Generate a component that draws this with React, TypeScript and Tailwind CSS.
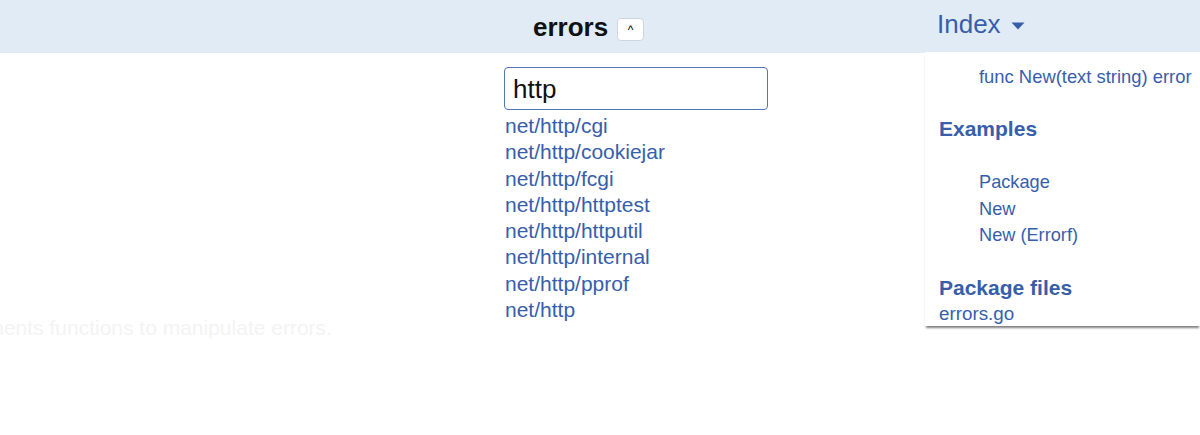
import React from "react";

const pkgs = [
  "net/http/cgi",
  "net/http/cookiejar",
  "net/http/fcgi",
  "net/http/httptest",
  "net/http/httputil",
  "net/http/internal",
  "net/http/pprof",
  "net/http",
];

export default function App() {
  return (
    <div
      className="w-[1200px] h-[435px] overflow-hidden bg-white"
      style={{ fontFamily: '"Liberation Sans", Arial, sans-serif' }}
    >
      {/* Header */}
      <div className="flex h-[53px] bg-[#e0ebf5]">
        <div className="w-[533px] shrink-0" />
        <div className="pt-[12px] text-[26px] leading-[30px] font-bold text-[#111]">errors</div>
        <div className="pt-[18px] ml-[9px]">
          <button className="flex h-[23px] w-[27px] items-start justify-center rounded-[4px] border border-[#d0d6dd] bg-white pt-[4px] text-[12px] leading-[14px] text-black">
            ^
          </button>
        </div>
        <div className="flex-1" />
        <div className="flex w-[263px] shrink-0 items-start pt-[9px]">
          <span className="text-[26px] leading-[30px] text-[#375eab]">Index</span>
          <svg className="ml-[10px] mt-[13px]" width="14" height="8" viewBox="0 0 14 8">
            <path d="M0.5 0.5 L13.5 0.5 L7 7.5 Z" fill="#375eab" />
          </svg>
        </div>
      </div>

      {/* Body */}
      <div className="flex">
        {/* Left faded content */}
        <div className="w-[504px] shrink-0 overflow-hidden pt-[262px]">
          <div className="ml-[-212px] whitespace-nowrap text-[21px] leading-[26px] text-[#f3f3f3]">
            Package errors implements functions to manipulate errors.
          </div>
        </div>

        {/* Middle search */}
        <div className="w-[421px] shrink-0 pt-[14px]">
          <div className="flex h-[43px] w-[264px] items-center rounded-[4px] border-[1.5px] border-[#5275b5] pl-[8px] pt-[2px] text-[26px] text-[#111]">
            http
          </div>
          <div className="mt-[3px] flex flex-col pl-[1px]">
            {pkgs.map((p) => (
              <span key={p} className="text-[21px] leading-[26.3px] text-[#375eab]">
                {p}
              </span>
            ))}
          </div>
        </div>

        {/* Right index panel */}
        <div className="mt-[-1px] h-[274px] w-[275px] shrink-0 bg-white pt-[12px] text-[#375eab] shadow-[0_3px_2px_-1px_rgba(0,0,0,0.5)]">
          <div className="pl-[54px] text-[18.4px] leading-[26px] whitespace-nowrap">
            func New(text string) error
          </div>
          <div className="mt-[26px] pl-[14px] text-[21px] font-bold leading-[26px]">Examples</div>
          <div className="mt-[27px] flex flex-col pl-[54px] text-[18.2px] leading-[26.5px]">
            <span>Package</span>
            <span>New</span>
            <span>New (Errorf)</span>
          </div>
          <div className="mt-[26px] pl-[14px] text-[21px] font-bold leading-[26px]">Package files</div>
          <div className="pl-[14px] text-[18.8px] leading-[26px]">errors.go</div>
        </div>
      </div>
    </div>
  );
}
